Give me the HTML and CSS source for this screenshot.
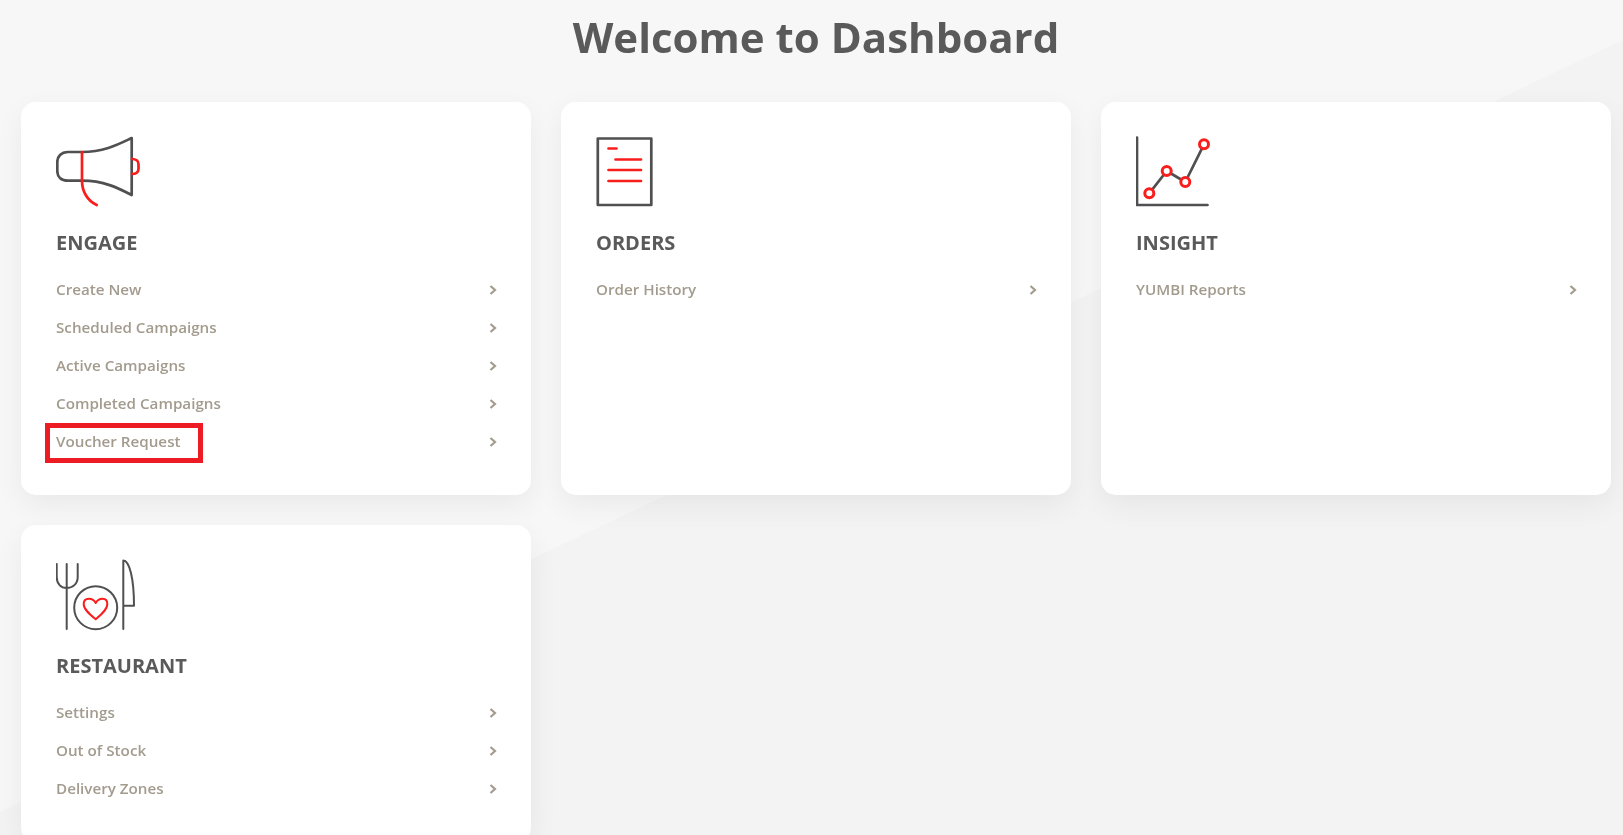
FILE: index.html
```html
<!DOCTYPE html>
<html lang="en">
<head>
<meta charset="utf-8">
<title>Dashboard</title>
<link rel="stylesheet" href="styles.css">
</head>
<body>
<main class="page">
  <h1 class="page-title">Welcome to Dashboard</h1>
  <div class="card-grid">
    <section class="card">
      <svg class="card-icon" viewBox="0 0 90 72" width="90" height="72" fill="none" stroke-linecap="round" stroke-linejoin="round">
        <path class="ink thick" d="M75.7 2C62 8.500 48 16 26 16H12C5 16 1.300 20.500 1.300 26V35C1.300 40.500 5 44.700 12 44.700H26C48 44.700 62 52 75.700 59Z"/>
        <path class="red thick" d="M26 16V44.700C26 55 31 64.500 40.700 69"/>
        <path class="red thick" d="M76 23C80 23 82.500 25 82.500 28V33C82.500 36 80 38 76 38"/>
      </svg>
      <h2 class="card-title">ENGAGE</h2>
      <ul class="link-list">
        <li class="link-row"><a class="link-label">Create New</a><svg class="chevron" viewBox="0 0 8 10" width="8" height="10"><path d="M1.500 1L6 5L1.500 9"/></svg></li>
        <li class="link-row"><a class="link-label">Scheduled Campaigns</a><svg class="chevron" viewBox="0 0 8 10" width="8" height="10"><path d="M1.500 1L6 5L1.500 9"/></svg></li>
        <li class="link-row"><a class="link-label">Active Campaigns</a><svg class="chevron" viewBox="0 0 8 10" width="8" height="10"><path d="M1.500 1L6 5L1.500 9"/></svg></li>
        <li class="link-row"><a class="link-label">Completed Campaigns</a><svg class="chevron" viewBox="0 0 8 10" width="8" height="10"><path d="M1.500 1L6 5L1.500 9"/></svg></li>
        <li class="link-row has-highlight"><a class="link-label">Voucher Request</a><span class="highlight-box"></span><svg class="chevron" viewBox="0 0 8 10" width="8" height="10"><path d="M1.500 1L6 5L1.500 9"/></svg></li>
      </ul>
    </section>

    <section class="card">
      <svg class="card-icon" viewBox="0 0 90 72" width="90" height="72" fill="none" stroke-linecap="round" stroke-linejoin="round">
        <rect class="ink thick" x="1.800" y="2.500" width="53.500" height="66.500"/>
        <path class="red thick" d="M12.500 12.500H20.500M19.500 23.500H45M12.500 34H45M12.500 45H45"/>
      </svg>
      <h2 class="card-title">ORDERS</h2>
      <ul class="link-list">
        <li class="link-row"><a class="link-label">Order History</a><svg class="chevron" viewBox="0 0 8 10" width="8" height="10"><path d="M1.500 1L6 5L1.500 9"/></svg></li>
      </ul>
    </section>

    <section class="card">
      <svg class="card-icon" viewBox="0 0 90 72" width="90" height="72" fill="none" stroke-linecap="round" stroke-linejoin="round">
        <path class="ink thick" d="M1 1.500V69H71.500"/>
        <path class="ink thick" d="M13.300 57.300L30.700 35L49.300 46L68 8.300"/>
        <circle class="red dot" cx="13.300" cy="57.300" r="4.500"/>
        <circle class="red dot" cx="30.700" cy="35" r="4.500"/>
        <circle class="red dot" cx="49.300" cy="46" r="4.500"/>
        <circle class="red dot" cx="68" cy="8.300" r="4.500"/>
      </svg>
      <h2 class="card-title">INSIGHT</h2>
      <ul class="link-list">
        <li class="link-row"><a class="link-label">YUMBI Reports</a><svg class="chevron" viewBox="0 0 8 10" width="8" height="10"><path d="M1.500 1L6 5L1.500 9"/></svg></li>
      </ul>
    </section>

    <section class="card">
      <svg class="card-icon" viewBox="0 0 90 72" width="90" height="72" fill="none" stroke-linecap="round" stroke-linejoin="round">
        <path class="ink thin" d="M10.700 5V70M0.700 5V18C0.700 25 5 29 10.700 29C16.500 29 21.700 25 21.700 18V5"/>
        <circle class="ink thin" cx="39.700" cy="48.700" r="21.500"/>
        <path class="red thin" d="M39.700 60.300C34 55.500 27.700 50.500 27.700 45C27.700 41 30.500 39.700 33 39.700C36 39.700 38.500 41.500 39.700 44C41 41.500 43.500 39.700 46.500 39.700C49 39.700 51.300 41 51.300 45C51.300 50.500 45.500 55.500 39.700 60.300Z"/>
        <path class="ink thin" d="M67.300 70V1.500C73.500 1.500 78 20 78 46.700H67.300"/>
      </svg>
      <h2 class="card-title">RESTAURANT</h2>
      <ul class="link-list">
        <li class="link-row"><a class="link-label">Settings</a><svg class="chevron" viewBox="0 0 8 10" width="8" height="10"><path d="M1.500 1L6 5L1.500 9"/></svg></li>
        <li class="link-row"><a class="link-label">Out of Stock</a><svg class="chevron" viewBox="0 0 8 10" width="8" height="10"><path d="M1.500 1L6 5L1.500 9"/></svg></li>
        <li class="link-row"><a class="link-label">Delivery Zones</a><svg class="chevron" viewBox="0 0 8 10" width="8" height="10"><path d="M1.500 1L6 5L1.500 9"/></svg></li>
      </ul>
    </section>
  </div>
</main>
</body>
</html>
```
FILE: styles.css
```css
* {
  box-sizing: border-box;
}

html,
body {
  height: 100%;
  margin: 0;
  overflow: hidden;
}

body {
  background: #f7f7f7;
  font-family: "Open Sans", "Liberation Sans", sans-serif;
  position: relative;
}

body::before {
  content: "";
  position: absolute;
  inset: 0;
  background: #f3f3f3;
  clip-path: polygon(0 812px, 100% 40px, 100% 100%, 0 100%);
}

.page {
  position: relative;
  padding: 0 12px 0 21px;
  will-change: transform;
}

.page-title {
  margin: 0;
  height: 102px;
  padding-top: 9px;
  text-align: center;
  font-size: 42px;
  line-height: 56px;
  font-weight: 700;
  color: #5a5a5b;
}

.card-grid {
  display: grid;
  grid-template-columns: repeat(3, 1fr);
  gap: 30px;
}

.card {
  background: #fff;
  border-radius: 15px;
  padding: 34px 35px;
  box-shadow: 0 10px 30px rgba(0, 0, 0, 0.06);
}

.card-icon {
  display: block;
}

.card-title {
  margin: 20px 0 13px;
  font-size: 20px;
  line-height: 30px;
  font-weight: 700;
  color: #5a5a5b;
}

.link-list {
  list-style: none;
  margin: 0;
  padding: 0;
}

.link-row {
  position: relative;
  display: flex;
  align-items: center;
  justify-content: space-between;
  height: 38px;
}

.link-label {
  position: relative;
  top: -1px;
  font-size: 15.200px;
  font-weight: 600;
  color: #a39b8e;
}

.chevron {
  fill: none;
  stroke: #a39b8e;
  stroke-width: 2.200;
  margin-right: -1px;
}

.highlight-box {
  position: absolute;
  left: -11px;
  top: 0;
  width: 158px;
  height: 40px;
  border: 5px solid #ed1c24;
}

.ink {
  stroke: #505052;
}

.red {
  stroke: #f81e1c;
}

.thick {
  stroke-width: 2.700;
}

.thin {
  stroke-width: 2;
}

.dot {
  fill: #fff;
  stroke-width: 3;
}
```
